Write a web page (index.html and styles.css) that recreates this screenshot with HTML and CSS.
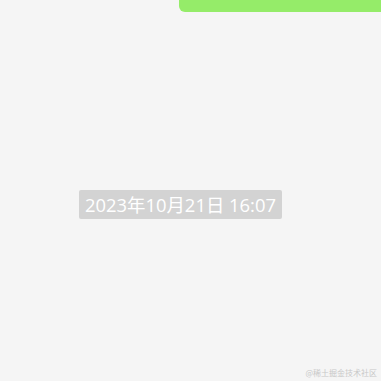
FILE: index.html
```html
<!DOCTYPE html>
<html lang="zh">
<head>
<meta charset="utf-8">
<link rel="stylesheet" href="styles.css">
</head>
<body>
<div class="page">
  <div class="top-row">
    <div class="bubble"></div>
  </div>
  <div class="time-row">
    <span class="time">2023年10月21日 16:07</span>
  </div>
  <div class="footer">
    <span class="mark">@稀土掘金技术社区</span>
  </div>
</div>
</body>
</html>
```

FILE: styles.css
```css
html, body {
  margin: 0;
  padding: 0;
  background: #f5f5f5;
}
.page {
  width: 381px;
  height: 381px;
  display: flex;
  flex-direction: column;
  font-family: "Noto Sans CJK SC", "Noto Sans", sans-serif;
}
.top-row {
  display: flex;
  justify-content: flex-end;
}
.bubble {
  width: 202px;
  height: 12px;
  background: #95ec69;
  border-radius: 0 0 0 6px;
}
.time-row {
  margin-top: 178px;
  padding-left: 79px;
  display: flex;
}
.time {
  background: #d3d3d3;
  color: #ffffff;
  font-family: "Open Sans", "Noto Sans CJK SC", sans-serif;
  font-size: 18.4px;
  line-height: 29px;
  height: 29px;
  padding: 0 6px;
  border-radius: 2px;
  white-space: nowrap;
}
.footer {
  margin-top: auto;
  display: flex;
  justify-content: flex-end;
  padding: 0 4px 3px 0;
}
.mark {
  font-size: 8px;
  line-height: 10px;
  color: #c8c8c8;
  font-family: "Noto Sans CJK SC", sans-serif;
}
```
